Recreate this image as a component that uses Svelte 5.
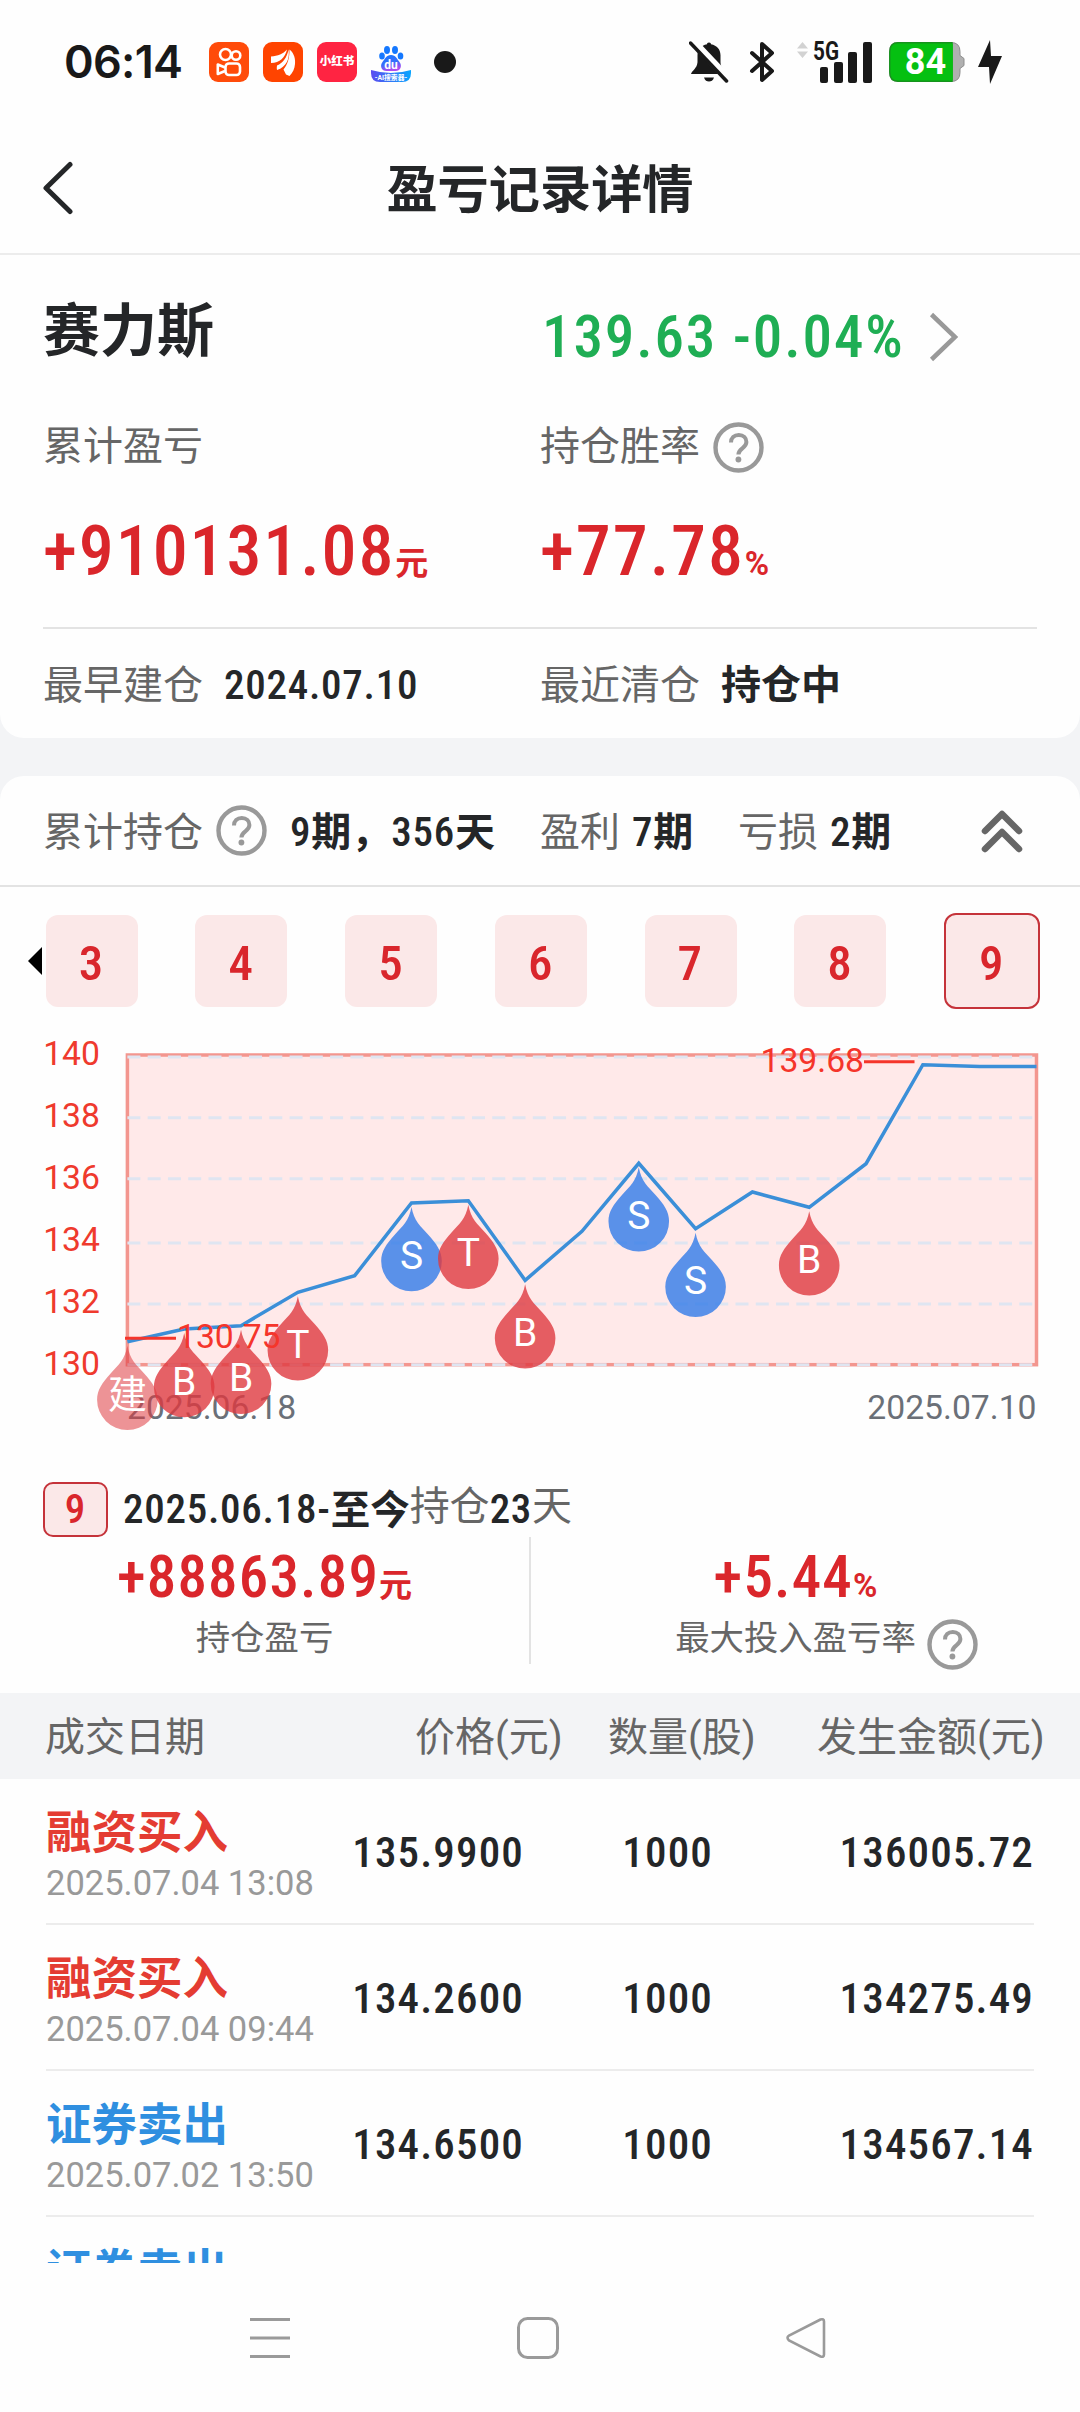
<script>
	const tabs = [3, 4, 5, 6, 7, 8, 9];
	let active = 9;

	const trades = [
		{ type: '融资买入', side: 'buy', time: '2025.07.04 13:08', price: '135.9900', count: '1000', amount: '136005.72' },
		{ type: '融资买入', side: 'buy', time: '2025.07.04 09:44', price: '134.2600', count: '1000', amount: '134275.49' },
		{ type: '证券卖出', side: 'sell', time: '2025.07.02 13:50', price: '134.6500', count: '1000', amount: '134567.14' },
		{ type: '证券卖出', side: 'sell' }
	];

	const left = 127.4;
	const right = 1036.5;
	const ys = [
		306.7, 294, 290.7, 257.3, 240.7, 168, 165.7, 245.3, 196.3, 128.3, 193.7, 157, 172.3, 128.7, 29.7, 31.5, 31.5
	];
	const points = ys.map((y, i) => ({ x: left + (i * (right - left)) / (ys.length - 1), y }));
	const line = points.map((p) => `${p.x},${p.y}`).join(' ');

	const axis = [
		{ label: 140, base: 30, grid: 22 },
		{ label: 138, base: 92.3, grid: 82.8 },
		{ label: 136, base: 154.2, grid: 143.7 },
		{ label: 134, base: 215.6, grid: 208 },
		{ label: 132, base: 278, grid: 269 },
		{ label: 130, base: 340, grid: 329.7 }
	];

	const marks = [
		{ at: 0, text: '建', kind: 'open' },
		{ at: 1, text: 'B', kind: 'buy' },
		{ at: 2, text: 'B', kind: 'buy' },
		{ at: 3, text: 'T', kind: 'buy' },
		{ at: 5, text: 'S', kind: 'sell' },
		{ at: 6, text: 'T', kind: 'buy' },
		{ at: 7, text: 'B', kind: 'buy' },
		{ at: 9, text: 'S', kind: 'sell' },
		{ at: 10, text: 'S', kind: 'sell' },
		{ at: 12, text: 'B', kind: 'buy' }
	];
</script>

{#snippet help()}
	<svg class="help" width="51" height="51" viewBox="0 0 51 51">
		<circle cx="25.5" cy="25.5" r="23" fill="none" stroke="#999" stroke-width="4.4" />
		<path d="M18 20.5c0-4.600 3.200-7.500 7.800-7.500s7.600 2.900 7.600 7c0 6.500-8 6.200-8 12.500" fill="none" stroke="#999" stroke-width="4" />
		<circle cx="25.400" cy="37.500" r="2.900" fill="#999" />
	</svg>
{/snippet}

<div class="page">
	<div class="status">
		<span class="clock">06:14</span>
		<div class="apps">
			<svg width="40" height="40" viewBox="0 0 40 40">
				<rect width="40" height="40" rx="9" fill="#ff4b0a" />
				<g fill="none" stroke="#fff" stroke-width="2.600">
					<circle cx="16.500" cy="12.500" r="5.500" />
					<circle cx="27" cy="13.500" r="4.300" />
					<rect x="16.500" y="21.500" width="14.500" height="11.500" rx="3.500" />
					<path d="M16 25.500L8.800 22.500v9.500l7.200-3" stroke-linejoin="round" />
				</g>
			</svg>
			<svg width="40" height="40" viewBox="0 0 40 40">
				<rect width="40" height="40" rx="9" fill="#ff4400" />
				<g fill="#fff">
					<path d="M8 14.500c7-.5 12-2.500 16-7-2 8-7 13.500-16 13.500z" />
					<path d="M14 28c-.5-2 0-4 0-4.500 6-2.500 10-8 11.500-16 1.500 9-2 17.500-11.500 20.500z" />
					<path d="M23 32.500l-2.500-5c4-5 6-11 6-20 5 4 6 10 5.500 14.500-.5 5-2 8.500-5.500 12z" />
				</g>
			</svg>
			<span class="red-app">小红书</span>
			<svg width="40" height="40" viewBox="0 0 40 40">
				<defs>
					<linearGradient id="paw" x1="0" y1="0" x2="0.300" y2="1">
						<stop offset="0" stop-color="#1478ff" />
						<stop offset="0.600" stop-color="#386dfc" />
						<stop offset="1" stop-color="#b04bf0" />
					</linearGradient>
					<linearGradient id="wave">
						<stop offset="0" stop-color="#5c4cf0" />
						<stop offset="1" stop-color="#08a5ff" />
					</linearGradient>
				</defs>
				<g fill="#1478ff">
					<ellipse cx="16" cy="8" rx="3" ry="4" />
					<ellipse cx="24" cy="8" rx="3" ry="4" />
					<ellipse cx="11" cy="14" rx="2.800" ry="3.600" />
					<ellipse cx="29.500" cy="14" rx="2.800" ry="3.600" />
				</g>
				<path d="M20 13c5 0 6 4 8.500 7 3 4 1 9-4 9h-9c-5 0-7-5-4-9 2.500-3 3.500-7 8.500-7z" fill="url(#paw)" />
				<path d="M0 28q20 6 40 0v3q0 9-9 9H9q-9 0-9-9z" fill="url(#wave)" />
				<text x="20" y="26.500" text-anchor="middle" font-size="12" font-weight="700" fill="#fff">du</text>
				<text x="20" y="38" text-anchor="middle" font-size="6.800" font-weight="700" fill="#fff">-AI搜索器-</text>
			</svg>
			<i class="dot"></i>
		</div>
		<div class="signals">
			<svg width="40" height="42" viewBox="0 0 40 42" fill="#191919">
				<path d="M20 1.500c1.500 0 2 1 2 1.800 6 1.200 9.500 5.200 9.500 11v7c0 6 4.500 7 6 11.700H2c1.500-4 6-5.500 6.500-11.700v-7c0-5.800 3.500-9.800 9.500-11 0-.8.500-1.800 2-1.800zM15 36.500h10c-1 3-2.800 4-5 4s-4-1-5-4z" />
				<path d="M3-.5L40 38.500" stroke="#fff" stroke-width="8" />
				<path d="M1.500 2L37.500 40" stroke="#191919" stroke-width="3.500" stroke-linecap="round" />
			</svg>
			<svg class="bt" width="26" height="42" viewBox="0 0 26 42">
				<path d="M3 12l20 18-10 9V3l10 9L3 30" fill="none" stroke="#191919" stroke-width="4" stroke-linejoin="round" stroke-linecap="round" />
			</svg>
			<svg class="cell" width="76" height="42" viewBox="0 0 76 42">
				<path d="M0 7.500l5.500-6.500L11 7.500zM0 10.500h11L5.500 17z" fill="#d2d2d2" />
				<text x="16" y="18.500" font-size="25" font-weight="700" fill="#191919" textLength="26" lengthAdjust="spacingAndGlyphs">5G</text>
				<g fill="#191919">
					<rect x="23" y="26" width="8" height="16" rx="2" />
					<rect x="37" y="21" width="9" height="21" rx="2" />
					<rect x="51" y="11" width="9" height="31" rx="2" />
					<rect x="66" y="1" width="9" height="41" rx="2" />
				</g>
			</svg>
			<svg class="battery" width="76" height="40" viewBox="0 0 76 40">
				<path d="M9 .5h53q9 0 9 9v4l4 3v7l-4 3v4q0 9-9 9H9q-8.500 0-8.500-9v-21q0-9 8.500-9z" fill="#b0b0b0" stroke="#8c8c8c" />
				<path d="M9 .8h54v38.400H9q-8.200 0-8.200-9v-20.400q0-9 8.200-9z" fill="#05c011" stroke="#16931c" stroke-width="1.400" />
				<rect x="60" y="1.600" width="3.800" height="36.800" fill="#05c011" />
				<text x="36.500" y="32" text-anchor="middle" font-size="36" font-weight="700" fill="#fff">84</text>
			</svg>
			<svg width="24" height="44" viewBox="0 0 24 44">
				<path d="M12 0L0 27h11l1 17L24 16H13z" fill="#191919" />
			</svg>
		</div>
	</div>

	<header>
		<svg class="back" width="32" height="56" viewBox="0 0 32 56">
			<path d="M28 3.500L4 27l24 23.500" fill="none" stroke="#242628" stroke-width="5" stroke-linecap="round" stroke-linejoin="round" />
		</svg>
		<h1>盈亏记录详情</h1>
	</header>

	<section class="card overview">
		<div class="pair top">
			<h2>赛力斯</h2>
			<div class="quote">
				<span class="din">139.63 -0.04%</span>
				<svg width="30" height="50" viewBox="0 0 30 50">
					<path d="M2.500 2.500L26 25 2.500 47.500" fill="none" stroke="#999" stroke-width="4.500" />
				</svg>
			</div>
		</div>
		<div class="pair labels">
			<span>累计盈亏</span>
			<span class="with-help">持仓胜率{@render help()}</span>
		</div>
		<div class="pair values">
			<div class="big din">+910131.08<small>元</small></div>
			<div class="big din">+77.78<small>%</small></div>
		</div>
		<div class="pair dates">
			<div>最早建仓<b class="num din">2024.07.10</b></div>
			<div>最近清仓<b>持仓中</b></div>
		</div>
	</section>

	<section class="card detail">
		<div class="totals">
			<span class="total">累计持仓{@render help()}</span>
			<b class="periods"><span class="num din">9</span>期，<span class="num din">356</span>天</b>
			<span class="won">盈利<b><span class="num din">7</span>期</b></span>
			<span class="lost">亏损<b><span class="num din">2</span>期</b></span>
			<svg width="44" height="46" viewBox="0 0 44 46">
				<path d="M5 22L22 5l17 17M5 40l17-17 17 17" fill="none" stroke="#666" stroke-width="6.500" stroke-linecap="round" stroke-linejoin="round" />
			</svg>
		</div>

		<div class="tabs">
			<i class="prev"></i>
			{#each tabs as tab}
				<button class="din" class:active={tab === active} on:click={() => (active = tab)}>{tab}</button>
			{/each}
		</div>

		<svg class="chart" width="1080" height="425" viewBox="0 0 1080 425">
			<rect x={left} y="20" width={right - left} height="309.700" fill="#ffe9e9" stroke="#f3968f" stroke-width="3.500" />
			{#each axis as a}
				<text class="axis" x="100" y={a.base}>{a.label}</text>
				<line x1={left} x2={right} y1={a.grid} y2={a.grid} stroke="#dfe5f1" stroke-width="3" stroke-dasharray="13 7.270" />
			{/each}
			<text class="date" x="127" y="383.700">2025.06.18</text>
			<text class="date end" x="1036.500" y="383.700">2025.07.10</text>
			<polyline points={line} fill="none" stroke="#3b8fd8" stroke-width="3.500" />
			{#each marks as m}
				<g transform="translate({points[m.at].x} {points[m.at].y})">
					<path
						class="drop {m.kind}"
						d="M0 4C2.500 18 9 23 17 32C25 41 30.300 48 30.300 58A30.300 30.300 0 0 1-30.300 58C-30.300 48-25 41-17 32C-9 23-2.500 18 0 4Z"
					/>
					<text class="mark" y={m.kind === 'open' ? 66 : 65.5}>{m.text}</text>
				</g>
			{/each}
			<g class="extreme">
				<line x1="125" x2="176" y1="303.300" y2="303.300" />
				<text x="177" y="312.500">130.75</text>
				<line x1="864" x2="914.500" y1="26.700" y2="26.700" />
				<text x="760.500" y="37">139.68</text>
			</g>
		</svg>

		<div class="range">
			<span class="chip din">9</span>
			<b class="num din">2025.06.18-</b><b class="now">至今</b>
			<span class="hold">持仓</span><b class="num din">23</b><span class="hold">天</span>
		</div>

		<div class="stats">
			<div class="stat first">
				<div class="big mid din">+88863.89<small>元</small></div>
				<div class="caption">持仓盈亏</div>
			</div>
			<div class="stat">
				<div class="big mid din">+5.44<small>%</small></div>
				<div class="caption">最大投入盈亏率{@render help()}</div>
			</div>
		</div>

		<div class="thead">
			<span>成交日期</span>
			<span>价格(元)</span>
			<span>数量(股)</span>
			<span>发生金额(元)</span>
		</div>
		<div class="rows">
			{#each trades as t}
				<div class="row">
					<div class="deal">
						<div class="type {t.side}">{t.type}</div>
						{#if t.time}
							<div class="time">{t.time}</div>
						{/if}
					</div>
					{#if t.price}
						<span class="din">{t.price}</span>
						<span class="din">{t.count}</span>
						<span class="din">{t.amount}</span>
					{/if}
				</div>
			{/each}
		</div>
	</section>

	<nav>
		<svg width="40" height="42" viewBox="0 0 40 42">
			<path d="M0 2.500h40M0 21h40M0 39.500h40" stroke="#9a9a9a" stroke-width="3.200" />
		</svg>
		<svg width="42" height="42" viewBox="0 0 42 42">
			<rect x="1.500" y="1.500" width="39" height="39" rx="9" fill="none" stroke="#9a9a9a" stroke-width="3" />
		</svg>
		<svg width="42" height="42" viewBox="0 0 42 42">
			<path d="M35.500 2.500L4 18.500q-3 2.200 0 5L35.500 39.500q3.500 1 3.500-2V4.500q0-3-3.500-2z" fill="none" stroke="#9a9a9a" stroke-width="2.600" />
		</svg>
	</nav>
</div>

<style>
	:global(body) {
		background: #f3f4f6;
	}

	.page {
		width: 1080px;
		height: 2412px;
		overflow: hidden;
		background: #f3f4f6;
		color: #242628;
		font-family: Roboto, 'Noto Sans CJK SC', sans-serif;
		font-size: 40px;
		line-height: 1.2;
	}

	svg {
		display: block;
		flex: none;
	}

	h1, h2 {
		margin: 0;
	}

	b {
		font-weight: 700;
	}

	/* narrow figures for prices and amounts */
	.din {
		font-stretch: 86%;
		font-weight: 480;
		letter-spacing: 0.027em;
	}

	.status {
		display: flex;
		align-items: center;
		height: 124px;
		padding: 0 78px 0 64px;
		box-sizing: border-box;
		background: #fefefe;
		color: #191919;
	}

	.clock {
		width: 145px;
		font-family: Inter, Roboto, sans-serif;
		font-size: 45px;
		font-weight: 600;
		letter-spacing: -0.7px;
	}

	.apps {
		display: flex;
		align-items: center;
		gap: 14px;
	}

	.red-app {
		display: flex;
		align-items: center;
		justify-content: center;
		width: 40px;
		height: 40px;
		border-radius: 9px;
		background: #ff2442;
		color: #fff;
		font-size: 11.5px;
		font-weight: 900;
	}

	.dot {
		width: 22px;
		height: 22px;
		margin-left: 9px;
		border-radius: 50%;
		background: #191919;
	}

	.signals {
		display: flex;
		align-items: center;
		margin-left: auto;
	}

	.bt {
		margin-left: 20px;
	}

	.cell {
		margin-left: 22px;
	}

	.battery {
		margin: 0 13px 0 16px;
	}

	header {
		display: flex;
		align-items: center;
		height: 129px;
		padding: 0 42px;
		border-bottom: 2px solid #ececec;
		background: #fefefe;
	}

	.back {
		margin-right: -32px;
	}

	h1 {
		flex: 1;
		padding-top: 4px;
		font-size: 51.2px;
		font-weight: 700;
		text-align: center;
	}

	.card {
		background: #fefefe;
	}

	.overview {
		height: 483px;
		margin-bottom: 38px;
		padding: 0 43px;
		box-sizing: border-box;
		border-radius: 0 0 24px 24px;
	}

	.pair {
		display: grid;
		grid-template-columns: 497px 497px;
		align-items: center;
		color: #666;
	}

	.top {
		height: 150px;
		color: #242628;
	}

	h2 {
		padding-top: 5px;
		font-size: 57px;
		font-weight: 700;
	}

	.quote {
		display: flex;
		align-items: center;
		gap: 24px;
		padding: 15px 0 0 2px;
		color: #1fae54;
		font-size: 59px;
	}

	.quote .din {
		letter-spacing: 0.032em;
	}

	.labels {
		height: 84px;
	}

	.with-help {
		display: flex;
		align-items: center;
		gap: 13px;
	}

	.values {
		height: 124px;
		margin-bottom: 14px;
	}

	.big {
		color: #da262b;
		font-size: 70px;
		white-space: nowrap;
	}

	.big small {
		font-size: 33px;
		font-stretch: 100%;
		font-weight: 700;
		letter-spacing: 0;
	}

	.dates {
		height: 113px;
		border-top: 2px solid #e3e3e3;
	}

	.dates b {
		margin-left: 21px;
		color: #242628;
	}

	.num {
		font-size: 41px;
		letter-spacing: 0.018em;
	}

	.detail {
		border-radius: 24px 24px 0 0;
	}

	.totals {
		display: flex;
		align-items: center;
		height: 111px;
		padding: 2px 56px 0 43px;
		box-sizing: border-box;
		border-bottom: 2px solid #e3e3e3;
		color: #666;
	}

	.totals > span,
	.periods {
		padding-top: 2px;
	}

	.totals b {
		color: #242628;
	}

	.total {
		display: flex;
		align-items: center;
		gap: 13px;
		width: 247px;
	}

	.total :global(.help) {
		margin-top: -4px;
	}

	.periods {
		width: 250px;
	}

	.won {
		width: 198px;
	}

	.won b,
	.lost b {
		margin-left: 12px;
	}

	.totals > svg {
		margin-left: auto;
	}

	.tabs {
		display: flex;
		align-items: center;
		justify-content: space-between;
		height: 148px;
		padding: 0 40px 0 28px;
		box-sizing: border-box;
	}

	.prev {
		margin-right: -54px;
		border: 14px solid transparent;
		border-left: 0;
		border-right-color: #000;
	}

	.tabs button {
		width: 92px;
		height: 92px;
		padding: 4px 0 0;
		border: 0;
		border-radius: 12px;
		background: #fbe8e8;
		color: #d9262c;
		font-family: inherit;
		font-size: 49px;
	}

	.tabs .active {
		width: 96px;
		height: 96px;
		border: 2px solid #c5333a;
	}

	.axis,
	.date,
	.extreme text {
		font-size: 33.7px;
	}

	.axis {
		fill: #ef3a2d;
		text-anchor: end;
	}

	.date {
		fill: #6b7078;
	}

	.end {
		text-anchor: end;
	}

	.drop {
		fill: #df3a40;
		opacity: 0.8;
	}

	.drop.sell {
		fill: #317ae8;
	}

	.drop.open {
		opacity: 0.55;
	}

	.mark {
		fill: #fff;
		font-size: 39px;
		text-anchor: middle;
	}

	.extreme {
		fill: #f5352b;
		stroke-width: 3;
	}

	.extreme line {
		stroke: #f5352b;
	}

	.range {
		display: flex;
		align-items: center;
		height: 55px;
		padding: 22px 43px 0;
		white-space: nowrap;
	}

	.chip {
		display: flex;
		align-items: center;
		justify-content: center;
		width: 61px;
		height: 51px;
		margin-right: 15px;
		border: 2px solid #c5333a;
		border-radius: 10px;
		background: #fbe8e8;
		color: #d9262c;
		font-size: 41px;
	}

	.now {
		padding-top: 3px;
		font-size: 39.5px;
	}

	.hold {
		padding-bottom: 5px;
		color: #666;
	}

	.stats {
		display: flex;
		height: 127px;
		margin-bottom: 29px;
	}

	.stat {
		width: 533px;
		text-align: center;
	}

	.first {
		width: 529px;
		border-right: 2px solid #e3e3e3;
	}

	.mid {
		height: 82px;
		font-size: 59px;
		line-height: 80px;
		letter-spacing: 0.02em;
	}

	.caption {
		display: flex;
		align-items: center;
		justify-content: center;
		height: 40px;
		color: #666;
		font-size: 34.4px;
	}

	.caption :global(.help) {
		margin: 10px -62px 0 11px;
	}

	.stat:last-child {
		margin-left: -2px;
	}

	.thead {
		display: grid;
		grid-template-columns: 370px 193px 209px 1fr;
		align-items: center;
		height: 86px;
		padding: 3px 0 0 45px;
		box-sizing: border-box;
		background: #f3f4f6;
		color: #666;
		white-space: nowrap;
	}

	.rows {
		height: 484px;
		overflow: hidden;
	}

	.row {
		display: grid;
		grid-template-columns: 300px 178px 189px 1fr;
		align-items: center;
		height: 144px;
		margin: 0 46px 0 46px;
		border-bottom: 2px solid #ececec;
		font-size: 43px;
		white-space: nowrap;
	}

	.row > span {
		padding-top: 4px;
		text-align: right;
	}

	.deal {
		align-self: start;
		padding-top: 28px;
	}

	.type {
		font-size: 45.5px;
		font-weight: 700;
	}

	.type.buy {
		color: #e43c32;
	}

	.type.sell {
		color: #2f8fe0;
	}

	.time {
		margin-top: 1px;
		color: #999;
		font-size: 34.5px;
	}

	nav {
		display: flex;
		align-items: center;
		justify-content: space-between;
		height: 149px;
		padding: 0 253px 0 250px;
		background: #fefefe;
	}
</style>
